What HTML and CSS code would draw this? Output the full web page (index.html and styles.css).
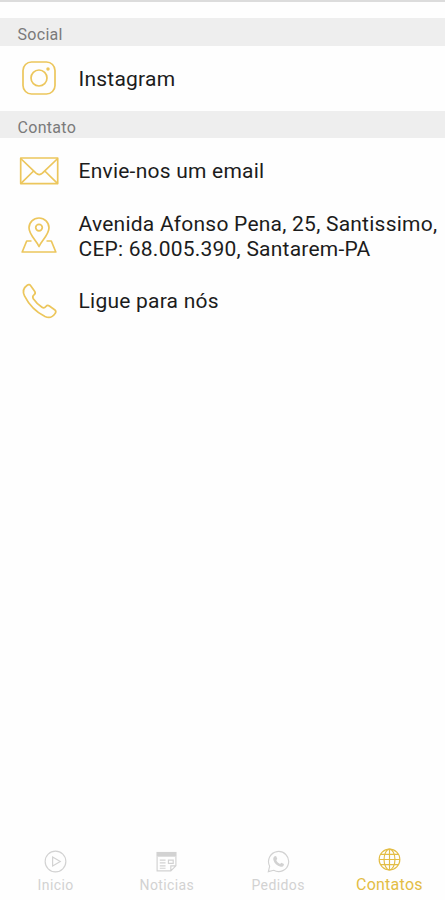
FILE: index.html
```html
<!DOCTYPE html>
<html lang="pt-BR">

<head>
    <meta charset="UTF-8">
    <title>Contatos</title>
    <link rel="stylesheet" href="styles.css">
</head>

<body>
    <div class="wrap">
        <div class="content">
            <h2 class="title">Social</h2>
            <ul class="list">
                <li>
                    <svg class="ico" viewBox="0 0 40 40">
                        <rect x="4" y="4" width="32" height="32" rx="8.5" />
                        <circle cx="20" cy="20" r="8" />
                        <circle cx="29" cy="11" r="0.9" />
                    </svg>
                    <span>Instagram</span>
                </li>
            </ul>
            <h2 class="title">Contato</h2>
            <ul class="list">
                <li>
                    <svg class="ico" viewBox="0 0 40 40">
                        <rect x="1.7" y="7" width="37" height="25.6" />
                        <path d="M1.7 7.5L17 22.2Q20.2 25 23.4 22.2L38.7 7.5M1.7 32.6L14.6 20M38.7 32.6L25.8 20" />
                    </svg>
                    <span>Envie-nos um email</span>
                </li>
                <li>
                    <svg class="ico" viewBox="0 0 40 40">
                        <path d="M20 30.5C17.5 24.5 10 19 10 11.8A10 9.8 0 0 1 30 11.8C30 19 22.5 24.5 20 30.5z" />
                        <circle cx="20" cy="11.6" r="3.3" />
                        <path d="M12.5 25H7.7L3.2 36H36.8L32.3 25H27.5" />
                    </svg>
                    <span>Avenida Afonso Pena, 25, Santissimo,<br>CEP: 68.005.390, Santarem-PA</span>
                </li>
                <li>
                    <svg class="ico" viewBox="0 0 40 40">
                        <path d="M8.2 4.2C9.6 3.2 11 3.6 11.9 4.9L15.6 10.2C16.5 11.5 16.2 13 15 13.9C13.6 15 13.4 16.2 14.3 17.7C16.8 21.3 19.5 24 23 26.3C24.5 27.3 25.8 26.9 26.9 25.5C27.8 24.4 29.2 24.2 30.4 25L35.6 28.7C36.9 29.7 37.2 31 36.2 32.4C33.6 36.3 30 37.4 26 35.5C17.5 31.2 10 23.8 5.5 14.8C3.6 10.8 4.4 6.8 8.2 4.2z" />
                    </svg>
                    <span>Ligue para nós</span>
                </li>
            </ul>
        </div>
        <div class="tabs">
            <a class="tab">
                <svg viewBox="0 0 24 24">
                    <circle cx="12" cy="12" r="10.8" />
                    <path d="M9 7.3V16.7L17 12z" />
                </svg>
                <span>Inicio</span>
            </a>
            <a class="tab">
                <svg viewBox="0 0 24 24">
                    <path class="fill" d="M1.5 2H22.5V7H1.5z" />
                    <path d="M2.2 7V21.8H16.5L21.8 16.5V7M5 10.5H11M5 13.5H11M5 16.5H11M5 19H11M14 10.5H19V14H14zM16.5 21.5V16.5H21.5" />
                </svg>
                <span>Noticias</span>
            </a>
            <a class="tab">
                <svg viewBox="0 0 24 24">
                    <path d="M1.4 22.6L2.8 16.9A10.5 10.5 0 1 1 7 21.2z" />
                    <path class="fill" d="M8.3 6.2L9.6 6.5L10.7 9.2L9.7 10.8C10.6 12.6 11.8 13.7 13.6 14.5L15 13.2L17.7 14.6C17.8 16.8 16.2 17.8 14.3 17.5C10.4 16.6 7.5 13.8 6.6 10.2C6.3 8.4 7 6.9 8.3 6.2z" />
                </svg>
                <span>Pedidos</span>
            </a>
            <a class="tab active">
                <svg viewBox="0 0 24 24">
                    <circle cx="12" cy="12" r="10.8" />
                    <ellipse cx="12" cy="12" rx="5.7" ry="10.8" />
                    <path d="M12 1.2V22.8M1.2 12H22.8M3 6.7H21M3 17.3H21" />
                </svg>
                <span>Contatos</span>
            </a>
        </div>
    </div>
</body>

</html>
```

FILE: styles.css
```css
* {
    padding: 0;
    margin: 0;
    box-sizing: border-box;
}

body {
    font-family: Roboto, "Liberation Sans", sans-serif;
    background: #fefefe;
    color: #1c1c1c;
}

ul {
    list-style: none;
}

.wrap {
    display: flex;
    flex-direction: column;
    height: 900px;
    border-top: 2px solid #dcdcdc;
    overflow: hidden;
}

.content {
    flex: 1;
    padding-top: 16px;
}

.title {
    height: 27.5px;
    padding: 3px 0 0 17.5px;
    line-height: 28px;
    font-size: 16px;
    font-weight: 400;
    letter-spacing: 0.3px;
    color: #7a7a7a;
    background: #eee;
}

.list li {
    display: flex;
    align-items: center;
    height: 65px;
    padding: 2px 0 0 19px;
    font-size: 21px;
    line-height: 25px;
    letter-spacing: 0.23px;
    white-space: nowrap;
}

.ico {
    width: 40px;
    height: 40px;
    margin: -2px 19.5px 0 0;
    fill: none;
    stroke: #ecc65c;
    stroke-width: 1.7;
    stroke-linejoin: round;
}

.tabs {
    display: flex;
    height: 50px;
}

.tab {
    flex: 1;
    display: flex;
    flex-direction: column;
    align-items: center;
    font-size: 14px;
    line-height: 18px;
    letter-spacing: 0.4px;
    color: #d2d2d2;
}

.tab svg {
    width: 23px;
    height: 23px;
    margin-bottom: 3px;
    fill: none;
    stroke: currentColor;
    stroke-width: 1.2;
}

.tab .fill {
    fill: currentColor;
    stroke: none;
}

.active {
    font-size: 16px;
    letter-spacing: 0.25px;
    color: #e3bd45;
}

.active svg {
    margin: -2px 0 5px;
}
```
